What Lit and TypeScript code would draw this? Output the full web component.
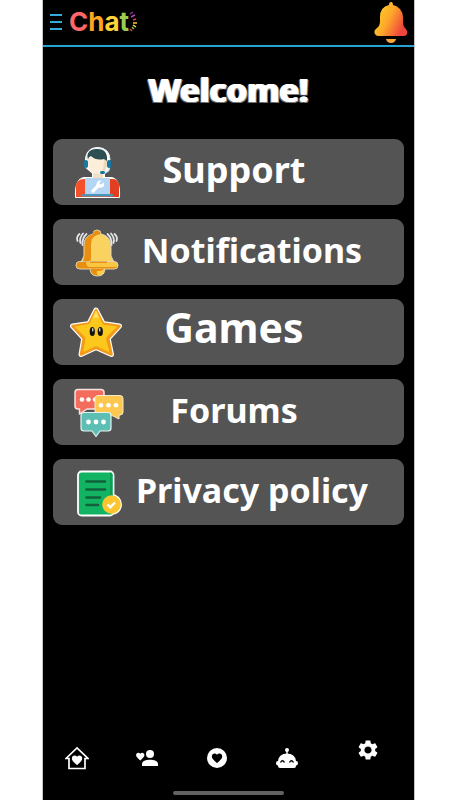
import { LitElement, html, css, svg } from "lit";
import { customElement } from "lit/decorators.js";
import { classMap } from "lit/directives/class-map.js";

const supportIcon = svg`
  <g fill="#fff" stroke="#fff" stroke-width="2" stroke-linejoin="round">
    <path d="M16 15C16 -1 39 -1 39 15V22L34 29V33H41Q50 34 49 52H6Q5 35 14 33H23V28L16 22Z"/>
  </g>
  <path d="M6 52V42Q6 34 14 34H42Q49 34 49 42V52Z" fill="#f4502a"/>
  <path d="M37 34H42Q49 34 49 42V52H37Z" fill="#e23f20"/>
  <path d="M23 26H33V34Q28 37 23 34Z" fill="#f3dfc2"/>
  <path d="M18 12Q18 6 28 6Q37 6 37 13V20Q36 29 28 29Q19 29 18 20Z" fill="#fdeeda"/>
  <path d="M34 12H37V20Q36 26 32 28Q34 22 34 12Z" fill="#f0d8b8"/>
  <path d="M18 15Q15 4 26 4Q38 3 37 16L34 14Q26 16 21 11Q18 12 18 15Z" fill="#2b4f52"/>
  <path d="M16 15Q16 3 28 3Q40 3 40 15" fill="none" stroke="#e9f1f3" stroke-width="1"/>
  <rect x="14" y="15" width="4" height="8" rx="2" fill="#1479a5"/>
  <rect x="37" y="15" width="4" height="8" rx="2" fill="#1479a5"/>
  <path d="M39 23Q39 27 34 27" fill="none" stroke="#d7edf8" stroke-width="2"/>
  <rect x="30" y="26" width="5" height="3" rx="1.5" fill="#1479a5"/>
  <rect x="15" y="33" width="25" height="17" rx="1" fill="#b5d5f5"/>
  <path d="M23 46L29 40" stroke="#fff" stroke-width="3.2" stroke-linecap="round"/>
  <path d="M33.500 37.500L30.500 40L29 38.500L31.500 35.500Q26 35 26.500 41Q29 44 33 42Q35 40 33.500 37.500Z" fill="#fff"/>
  <rect x="12" y="49" width="31" height="2.500" rx="1" fill="#4b97ba"/>`;

const notificationsIcon = svg`
  <g fill="none" stroke="#e4e4e8" stroke-width="1.800" stroke-linecap="round">
    <path d="M9.500 9Q6 12 7.500 16M13 8.500Q9 13 10.500 18M16.500 9Q12 13 12.500 20"/>
    <path d="M44.500 9Q48 12 46.500 16M41 8.500Q45 13 43.500 18M37.500 9Q42 13 41.500 20"/>
  </g>
  <g stroke="#ddd6c4" stroke-width="1">
    <path d="M20 43H35Q35 51 27.500 51Q20 51 20 43Z" fill="#ffce45"/>
    <path d="M23 9Q23 5 27 5Q31 5 31 9Q41 11 41 22V31L44 37H11L14 31V20Q14 11 23 9Z" fill="#f9d260"/>
    <rect x="6" y="36.500" width="42" height="7.500" rx="3.700" fill="#f9c643"/>
  </g>
  <path d="M23 9Q23 5.500 27 5.500Q30.500 5.500 30.500 9L27 10Q21 12 21 20V34Q21 36 18 36.500H13L14.500 31V20Q14.500 11 23 9Z" fill="#e88f12"/>
  <path d="M20 36.500H37V38H20Z" fill="#e88f12"/>
  <path d="M9 37Q6.500 38 6.500 40Q6.500 43.500 10 43.500H44Q47 43.500 47 41Q47 42 43 42H20Q16 42 16 37Z" fill="#e88f12"/>
  <path d="M20.500 44H34Q32 46 27 46Q26 49 29 50.500Q21 51 20.500 44Z" fill="#e88f12"/>`;

const gamesIcon = svg`
  <path d="M26 5L32.500 17.500Q33 18.500 34.500 18.800L49.500 21L39 32.500Q38 33.500 38.500 35L41.500 49.500L28 43.500Q26 42.500 24 43.500L11 49.500L13.500 35Q13.700 33.500 13 32.500L2.500 21L17.500 18.800Q19 18.500 19.500 17.500Z" fill="#f39a1b" stroke="#fff" stroke-width="5" stroke-linejoin="round"/>
  <path d="M26 5L32.500 17.500Q33 18.500 34.500 18.800L49.500 21L39 32.500Q38 33.500 38.500 35L41.500 49.500L28 43.500Q26 42.500 24 43.500L11 49.500L13.500 35Q13.700 33.500 13 32.500L2.500 21L17.500 18.800Q19 18.500 19.500 17.500Z" fill="#f39a1b" stroke="#f39a1b" stroke-width="2.600" stroke-linejoin="round"/>
  <path d="M26 6L31.500 18.500Q32 20 34 20.500L46 22L36.500 31Q35 33 35.500 35L38.500 46L28 41Q26 40 24 41L14 46L16 35Q16.500 33 15 31L6 22L18 20Q20 20 20.500 18.500Z" fill="#fcc81c" stroke="#fcc81c" stroke-width="1.500" stroke-linejoin="round"/>
  <path d="M26 6L29 13Q26 12 23 13Z" fill="#ffe36b"/>
  <ellipse cx="22.300" cy="26.500" rx="2.600" ry="4.600" fill="#15120a"/>
  <ellipse cx="30.300" cy="26.500" rx="2.600" ry="4.600" fill="#15120a"/>
  <path d="M22.800 23.500V26M29.800 23.500V26" stroke="#fff" stroke-width="1.100" stroke-linecap="round"/>`;

const forumsIcon = svg`
  <path d="M8 4.500H31Q34 4.500 34 7.500V24H17L9.500 29V24H8Q5 24 5 21V7.500Q5 4.500 8 4.500Z" fill="#f36c5c" stroke="#f4e4df" stroke-width="1.500" stroke-linejoin="round"/>
  <g fill="#fff"><circle cx="12" cy="14.500" r="2.300"/><circle cx="18.500" cy="14.500" r="2.300"/><circle cx="25" cy="14.500" r="2.300"/></g>
  <path d="M28 10.500H50Q53 10.500 53 13.500V27Q53 30 50 30H49V34L41 30H25V13.500Q25 10.500 28 10.500Z" fill="#fdc84f" stroke="#f5e9c9" stroke-width="1" stroke-linejoin="round"/>
  <g fill="#fff"><circle cx="31" cy="20.300" r="2.300"/><circle cx="38.500" cy="20.300" r="2.300"/><circle cx="46" cy="20.300" r="2.300"/></g>
  <path d="M14 27.500H38Q41 27.500 41 30.500V43Q41 46 38 46H30L26 51.500L22 46H14Q11 46 11 43V30.500Q11 27.500 14 27.500Z" fill="#5dbfb3" stroke="#e5f3f0" stroke-width="1.200" stroke-linejoin="round"/>
  <g fill="#fff"><circle cx="18.500" cy="37" r="2.400"/><circle cx="26" cy="37" r="2.400"/><circle cx="33.500" cy="37" r="2.400"/></g>`;

const privacyIcon = svg`
  <circle cx="41.500" cy="39.500" r="10.500" fill="#fff"/>
  <rect x="8" y="6.500" width="35.500" height="44" rx="3.500" fill="#12b463" stroke="#fff" stroke-width="1.800"/>
  <path d="M40 7.500H41Q42.500 7.500 42.500 10V32H40Z" fill="#0d9d54"/>
  <path d="M16.500 16.500H35M16.500 24.500H35M16.500 32.500H30M16.500 40H28" stroke="#12613a" stroke-width="2.600" stroke-linecap="round"/>
  <circle cx="41.500" cy="39.500" r="9.300" fill="#fdc62e"/>
  <path d="M37.500 39.500L40.300 42.200L45 37.500" fill="none" stroke="#fff" stroke-width="2.400"/>`;

const heart = (x: number, y: number, s: number, fill: string) => svg`
  <path transform="translate(${x} ${y}) scale(${s})" fill=${fill}
    d="M12 21.350l-1.450-1.320C5.400 15.360 2 12.280 2 8.500 2 5.420 4.420 3 7.500 3c1.740 0 3.410.81 4.500 2.090C13.090 3.810 14.760 3 16.500 3 19.580 3 22 5.420 22 8.500c0 3.780-3.400 6.860-8.550 11.540L12 21.350z"/>`;

const tabs = [
  {
    name: "Home",
    icon: svg`<path d="M1 12.500L12 2L23 12.500H20V22.500H4V12.500Z" fill="none" stroke="#fff" stroke-width="1.700"/>${heart(5.8, 8, 0.52, "#fff")}`,
  },
  {
    name: "Friends",
    icon: svg`<circle cx="15" cy="8" r="4"/><path d="M7 20V18C7 15 11 13.700 15 13.700S23 15 23 18V20Z"/>${heart(0.2, 5.5, 0.42, "#fff")}`,
  },
  {
    name: "Favorites",
    icon: svg`<circle cx="12" cy="12" r="10"/>${heart(5.8, 6, 0.52, "#000")}`,
  },
  {
    name: "Assistant",
    icon: svg`<circle cx="12" cy="4" r="2"/><path d="M11.300 4H12.700V8H11.300Z"/>
      <path d="M3 15Q4 7.500 12 7.500T21 15Q23 15 23 17Q23 19.500 21 19.500V20Q21 22 19 22H5Q3 22 3 20V19.500Q1 19.500 1 17Q1 15 3 15Z"/>
      <path d="M5.500 16.500Q7.500 13 9.500 16.500M14.500 16.500Q16.500 13 18.500 16.500" fill="none" stroke="#000" stroke-width="1.400"/>`,
  },
  {
    name: "Settings",
    icon: svg`<path d="M19.140 12.940c.04-.3.060-.61.060-.94s-.02-.64-.07-.94l2.030-1.580c.18-.14.230-.41.120-.61l-1.920-3.320c-.12-.22-.37-.29-.59-.22l-2.390.96c-.5-.38-1.030-.7-1.620-.94l-.36-2.540c-.04-.24-.24-.41-.48-.41h-3.840c-.24 0-.43.17-.47.41l-.36 2.540c-.59.24-1.130.57-1.620.94l-2.390-.96c-.22-.08-.47 0-.59.22L2.740 8.870c-.12.21-.08.47.12.61l2.030 1.580c-.05.3-.09.63-.09.94s.02.64.07.94l-2.030 1.580c-.18.14-.23.41-.12.61l1.920 3.320c.12.22.37.29.59.22l2.390-.96c.5.38 1.030.7 1.620.94l.36 2.540c.05.24.24.41.48.41h3.840c.24 0 .44-.17.47-.41l.36-2.540c.59-.24 1.130-.56 1.620-.94l2.390.96c.22.08.47 0 .59-.22l1.920-3.320c.12-.22.070-.47-.12-.61l-2.010-1.580zM12 15.600c-1.980 0-3.600-1.620-3.600-3.600s1.620-3.600 3.600-3.600 3.600 1.620 3.600 3.600-1.620 3.600-3.600 3.600z"/>`,
  },
];

const items = [
  { label: "Support", icon: supportIcon, size: "", wide: false },
  { label: "Notifications", icon: notificationsIcon, size: "small", wide: true },
  { label: "Games", icon: gamesIcon, size: "large", wide: false },
  { label: "Forums", icon: forumsIcon, size: "small", wide: false },
  { label: "Privacy policy", icon: privacyIcon, size: "small", wide: true },
];

@customElement("app-root")
export class AppRoot extends LitElement {
  static styles = css`
    :host {
      display: block;
      background: #fff;
      font-family: "Noto Sans", "Open Sans", sans-serif;
    }
    * {
      box-sizing: border-box;
    }
    button {
      border: 0;
      padding: 0;
      background: none;
      color: inherit;
      font: inherit;
      cursor: pointer;
    }
    svg {
      display: block;
      flex: none;
    }
    .screen {
      display: flex;
      flex-direction: column;
      min-height: 100vh;
      margin: 0 35px 0 42px;
      border: solid #c4c4c4;
      border-width: 0 1px;
      background: #000;
      color: #fff;
    }
    .bar {
      display: flex;
      align-items: center;
      height: 47px;
      padding: 0 5px 2px 6px;
      border-bottom: 2px solid #27a3d3;
    }
    .logo {
      display: flex;
      align-items: center;
      flex: 1;
      margin-left: 6px;
      font: 700 26px/44px Inter, sans-serif;
    }
    .c { color: #ff6769; }
    .h { color: #ffa51f; }
    .a { color: #ffd335; }
    .t { color: #9ccc50; }
    h1 {
      margin: 19px 0 26px;
      font-size: 33px;
      line-height: 47px;
      font-weight: 700;
      text-align: center;
      text-shadow: -1px 0 #fff, 1px 0 #fff, 2px 1px #777, -2px 1px #666;
    }
    .menu {
      display: flex;
      flex-direction: column;
      gap: 14px;
      padding: 0 10px;
    }
    .item {
      display: grid;
      grid-template-columns: 54px 1fr;
      align-items: center;
      height: 66px;
      padding: 0 60px 0 17px;
      border-radius: 9px;
      background: #545454;
      font-size: 36px;
      line-height: 62px;
      font-weight: 700;
      text-align: center;
      white-space: nowrap;
    }
    .item.wide {
      padding-right: 24px;
    }
    .label {
      height: 66px;
    }
    .text {
      line-height: 1;
    }
    .small {
      font-size: 34px;
    }
    .large {
      font-size: 41px;
    }
    .tabs {
      display: grid;
      grid-template-columns: repeat(4, 70fr) 91fr;
      align-items: end;
      justify-items: center;
      height: 32px;
      margin: auto 1px 0 -1px;
      fill: #fff;
    }
    .tab:last-child {
      align-self: start;
    }
    .handle {
      width: 30%;
      height: 4px;
      margin: 21px auto 5px;
      border-radius: 2px;
      background: #626262;
    }
  `;

  render() {
    return html`
      <div class="screen">
        <header class="bar">
          <button aria-label="Menu">
            <svg width="14" height="18" viewBox="0 0 14 18">
              <path d="M1 2H13M1 9H13M1 16H13" stroke="#35abdb" stroke-width="2.200" />
            </svg>
          </button>
          <div class="logo">
            <span class="c">C</span><span class="h">h</span><span class="a">a</span><span class="t">t</span>
            <svg width="9" height="22" viewBox="0 0 9 22" fill="none" stroke-width="1.500">
              <path d="M1 3L4 1" stroke="#81369b" />
              <path d="M2 6L6 4" stroke="#b04bb5" />
              <path d="M4 9L7 8" stroke="#e5383f" />
              <path d="M4 12H8" stroke="#ffc928" />
              <path d="M4 14L7 16" stroke="#f4e04a" />
              <path d="M3 16L5 18" stroke="#7fc241" />
              <path d="M1 18L3 20" stroke="#d7473b" />
            </svg>
          </div>
          <button aria-label="Alerts">
            <svg width="36" height="42" viewBox="0 0 36 42">
              <defs>
                <linearGradient id="glow" x1="0" y1="0" x2="1" y2="0.500">
                  <stop offset="0.100" stop-color="#ffd326" />
                  <stop offset="0.550" stop-color="#fda72b" />
                  <stop offset="1" stop-color="#f0443c" />
                </linearGradient>
              </defs>
              <path fill="url(#glow)" d="M16 4Q16 1 18 1Q20 1 20 4Q29 6 30 16V21Q30 26 33 28Q35 31 34 33Q33 35 31 35H5Q3 35 2 33Q0 30 4 27Q7 25 7 20V16Q7 6 16 4Z" />
              <path fill="#fba83a" d="M13 38H23Q22 42 18 42Q14 42 13 38Z" />
            </svg>
          </button>
        </header>
        <h1>Welcome!</h1>
        <main class="menu">
          ${items.map(
            (item) => html`
              <button class=${classMap({ item: true, wide: item.wide })}>
                <svg width="54" height="54" viewBox="0 0 54 54" aria-hidden="true">${item.icon}</svg>
                <span class="label"><span class="text ${item.size}">${item.label}</span></span>
              </button>
            `
          )}
        </main>
        <nav class="tabs">
          ${tabs.map(
            (tab) => html`
              <button class="tab" aria-label=${tab.name}>
                <svg width="24" height="24" viewBox="0 0 24 24">${tab.icon}</svg>
              </button>
            `
          )}
        </nav>
        <div class="handle"></div>
      </div>
    `;
  }
}
